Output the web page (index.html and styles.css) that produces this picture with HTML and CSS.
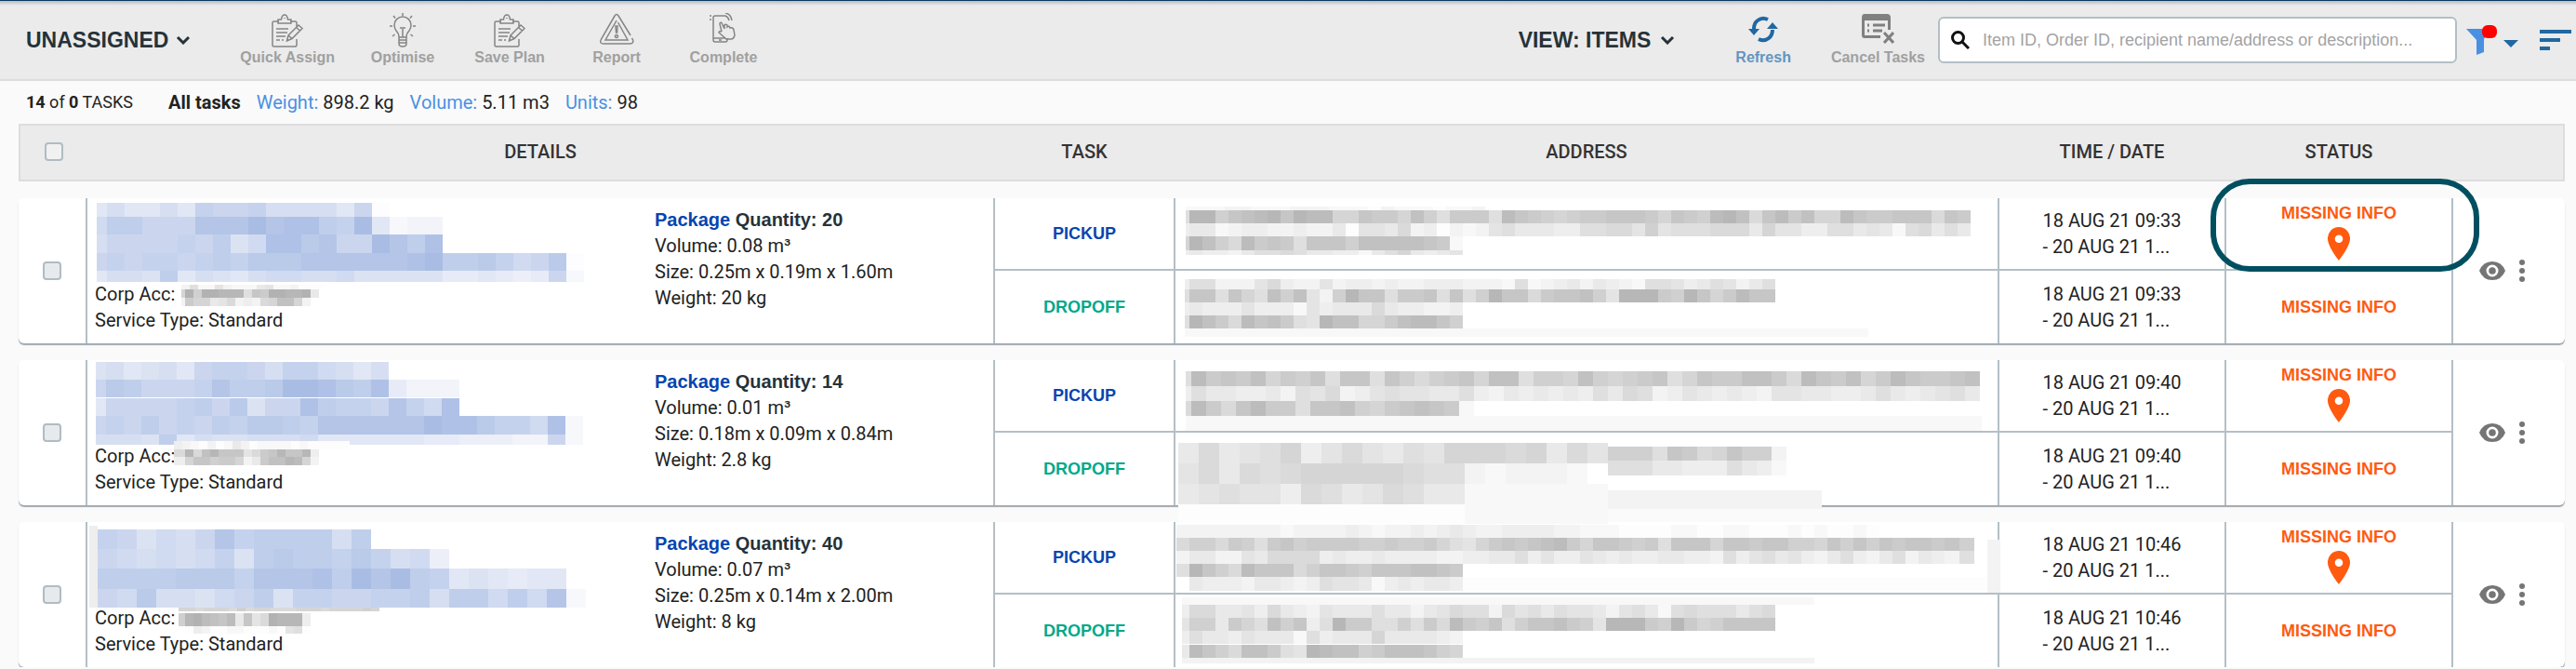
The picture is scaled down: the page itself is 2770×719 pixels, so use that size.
FILE: index.html
```html
<!DOCTYPE html>
<html lang="en">
<head>
    <meta charset="UTF-8">
    <title>Unassigned tasks</title>
    <link rel="stylesheet" href="styles.css">
    <script src="mosaic.js" defer></script>
</head>
<body>
    <svg class="defs" aria-hidden="true">
        <symbol id="clipboard" viewBox="0 0 36 38">
            <path d="M9 9H3.500Q2 9 2 10.500V34.500Q2 36 3.500 36H26.500Q28 36 28 34.500V28M28 15V10.500Q28 9 26.500 9H21M8 11V7H11.500Q12 2 15 2T18.500 7H22V11ZM15 5V6M6 17H19M6 21H18M6 25H16M6 29H10M12 29H14M19 24 30 13 34 16.500 23 27.500 17.500 30ZM19 24 23 27.500M27.500 15.500 31.500 19"/>
        </symbol>
        <symbol id="bulb" viewBox="0 0 30 38">
            <path d="M11 26Q11 22 8 19Q6 16 6 13A9 9 0 0 1 24 13Q24 16 22 19Q19 22 19 26ZM11 26V33Q11 36 15 36T19 33V26M11 29H19M11 32H19M15 26V17M12 16H18M15 0V3M5 3 7 5.500M25 3 23 5.500M1 14H4M26 14H29M4 25 6.500 23M26 25 23.500 23"/>
        </symbol>
        <symbol id="warning" viewBox="0 0 38 36">
            <path d="M17 3Q19 0 21 3L34 24M35.500 27Q39 33 33 33H5Q0 33 2.500 28L17 3M19 8 7 29H31L20.500 10M18 14H20L19.500 21H18.500ZM19 23.500A1.500 1.500 0 1 1 18.900 23.500"/>
        </symbol>
        <symbol id="tap" viewBox="0 0 32 34">
            <path d="M18 3H7Q5 3 5 5V29Q5 31 7 31H18Q20 31 20 29V27M5 27H18M11 29H14M2 2V4M2 6V8M18 0Q24 1 25 8M18 3Q21 4 22 8M14 20 12 12Q12 9.500 14 10.500L17 17V13Q18 11.500 20 13V15Q22 13 23 16Q26 15 27 18L28 24Q27 28 24 28H19L11 21Q11 19 14 20"/>
        </symbol>
        <symbol id="chevron" viewBox="0 0 16 10">
            <path d="M2 2 8 8 14 2"/>
        </symbol>
        <symbol id="pin" viewBox="0 0 24 36">
            <path fill-rule="evenodd" d="M12 0A12 12 0 0 1 24 12.500C24 21 12 36 12 36S0 21 0 12.500A12 12 0 0 1 12 0ZM12 8.500A4.300 4.300 0 1 0 12 17.100A4.300 4.300 0 1 0 12 8.500Z"/>
        </symbol>
        <symbol id="eye" viewBox="0 0 28 20">
            <path fill-rule="evenodd" d="M14 0Q24 0 28 10Q24 20 14 20T0 10Q4 0 14 0ZM14 3.500A6.500 6.500 0 1 0 14 16.500A6.500 6.500 0 1 0 14 3.500ZM14 6.200A3.800 3.800 0 1 1 14 13.800A3.800 3.800 0 1 1 14 6.200Z"/>
        </symbol>
        <symbol id="dots" viewBox="0 0 6 24">
            <circle cx="3" cy="3" r="3"/><circle cx="3" cy="12" r="3"/><circle cx="3" cy="21" r="3"/>
        </symbol>
    </svg>

    <header class="toolbar">
        <button class="menu">UNASSIGNED <svg class="chevron"><use href="#chevron"/></svg></button>
        <div class="tools">
            <button class="tool"><svg width="36" height="38"><use href="#clipboard"/></svg>Quick Assign</button>
            <button class="tool"><svg width="30" height="38"><use href="#bulb"/></svg>Optimise</button>
            <button class="tool"><svg width="36" height="38"><use href="#clipboard"/></svg>Save Plan</button>
            <button class="tool"><svg width="38" height="36"><use href="#warning"/></svg>Report</button>
            <button class="tool"><svg width="32" height="34"><use href="#tap"/></svg>Complete</button>
        </div>
        <div class="actions">
            <button class="menu">VIEW: ITEMS <svg class="chevron"><use href="#chevron"/></svg></button>
            <button class="tool refresh">
                <svg class="refresh-icon" width="34" height="34" viewBox="0 0 34 34">
                    <path d="M22 7Q16 4 11 8Q7 11 7 17M12 28Q18 31 23 27Q27 24 27 18"/>
                    <path class="solid" d="M1 17H13L7 24ZM21 17H33L27 10Z"/>
                </svg>
                Refresh
            </button>
            <button class="tool">
                <svg class="cancel-icon" width="36" height="34" viewBox="0 0 36 34">
                    <path class="solid" fill-rule="evenodd" d="M4 1H28Q32 1 32 5V18H29V8H4V24H21V27H4Q1 27 1 24V5Q1 1 4 1Z"/>
                    <path d="M7 13H9M13 13H26M7 19H9M13 19H23M25 21 35 32M35 21 25 32"/>
                </svg>
                Cancel Tasks
            </button>
            <div class="search">
                <svg width="20" height="20" viewBox="0 0 20 20"><circle cx="7.500" cy="7.500" r="6"/><path d="M12 12 19 19"/></svg>
                <input type="search" aria-label="Search" placeholder="Item ID, Order ID, recipient name/address or description...">
            </div>
            <button class="filter" aria-label="Filter">
                <svg width="56" height="34" viewBox="0 0 56 34">
                    <path fill="#4a90e2" d="M0 5H26L19 16V30L11 33V17Z"/>
                    <rect x="17" y="1" width="16" height="14" rx="6" fill="#f00"/>
                    <path fill="#2168a3" d="M40 17H56L48 25Z"/>
                </svg>
            </button>
            <button class="sort" aria-label="Sort">
                <svg width="34" height="22" viewBox="0 0 34 22"><path fill="#2168a3" d="M0 0H34V4H0ZM0 9H22V13H0ZM0 18H11V22H0Z"/></svg>
            </button>
        </div>
    </header>

    <main class="content">
        <div class="summary">
            <span class="count"><b>14</b> of <b>0</b> TASKS</span>
            <b>All tasks</b>
            <span><span class="key">Weight:</span> 898.2 kg</span>
            <span><span class="key">Volume:</span> 5.11 m3</span>
            <span><span class="key">Units:</span> 98</span>
        </div>

        <table class="tasks">
            <thead>
                <tr>
                    <th><input type="checkbox" aria-label="Select all"></th>
                    <th>DETAILS</th>
                    <th>TASK</th>
                    <th>ADDRESS</th>
                    <th>TIME / DATE</th>
                    <th>STATUS</th>
                    <th></th>
                </tr>
            </thead>
            <tbody>
                <tr>
                    <td class="both select" rowspan="2"><input type="checkbox" aria-label="Select task"></td>
                    <td class="both details" rowspan="2">
                        <div class="account">
                            <p>Corp Acc:</p>
                            <p>Service Type: Standard</p>
                        </div>
                        <div class="package">
                            <p class="quantity"><a href="#">Package</a> Quantity: 20</p>
                            <p>Volume: 0.08 m³</p>
                            <p>Size: 0.25m x 0.19m x 1.60m</p>
                            <p>Weight: 20 kg</p>
                        </div>
                        <svg class="mosaic" data-mosaic="details1"></svg>
                    </td>
                    <td class="type pickup">PICKUP</td>
                    <td class="address"><svg class="mosaic" data-mosaic="pickup1"></svg></td>
                    <td class="time"><div>18 AUG 21 09:33<br>- 20 AUG 21 1...</div></td>
                    <td class="status located">MISSING INFO<svg class="pin"><use href="#pin"/></svg><span class="highlight"></span></td>
                    <td class="both row-actions" rowspan="2">
                        <button aria-label="View"><svg width="28" height="20"><use href="#eye"/></svg></button>
                        <button aria-label="More"><svg width="6" height="24"><use href="#dots"/></svg></button>
                    </td>
                </tr>
                <tr>
                    <td class="type dropoff">DROPOFF</td>
                    <td class="address"><svg class="mosaic" data-mosaic="dropoff1"></svg></td>
                    <td class="time"><div>18 AUG 21 09:33<br>- 20 AUG 21 1...</div></td>
                    <td class="status">MISSING INFO</td>
                </tr>
            </tbody>
            <tbody>
                <tr>
                    <td class="both select" rowspan="2"><input type="checkbox" aria-label="Select task"></td>
                    <td class="both details" rowspan="2">
                        <div class="account">
                            <p>Corp Acc:</p>
                            <p>Service Type: Standard</p>
                        </div>
                        <div class="package">
                            <p class="quantity"><a href="#">Package</a> Quantity: 14</p>
                            <p>Volume: 0.01 m³</p>
                            <p>Size: 0.18m x 0.09m x 0.84m</p>
                            <p>Weight: 2.8 kg</p>
                        </div>
                        <svg class="mosaic" data-mosaic="details2"></svg>
                    </td>
                    <td class="type pickup">PICKUP</td>
                    <td class="address"><svg class="mosaic" data-mosaic="pickup2"></svg></td>
                    <td class="time"><div>18 AUG 21 09:40<br>- 20 AUG 21 1...</div></td>
                    <td class="status located">MISSING INFO<svg class="pin"><use href="#pin"/></svg></td>
                    <td class="both row-actions" rowspan="2">
                        <button aria-label="View"><svg width="28" height="20"><use href="#eye"/></svg></button>
                        <button aria-label="More"><svg width="6" height="24"><use href="#dots"/></svg></button>
                    </td>
                </tr>
                <tr>
                    <td class="type dropoff">DROPOFF</td>
                    <td class="address"><svg class="mosaic" data-mosaic="dropoff2"></svg></td>
                    <td class="time"><div>18 AUG 21 09:40<br>- 20 AUG 21 1...</div></td>
                    <td class="status">MISSING INFO</td>
                </tr>
            </tbody>
            <tbody>
                <tr>
                    <td class="both select" rowspan="2"><input type="checkbox" aria-label="Select task"></td>
                    <td class="both details" rowspan="2">
                        <div class="account">
                            <p>Corp Acc:</p>
                            <p>Service Type: Standard</p>
                        </div>
                        <div class="package">
                            <p class="quantity"><a href="#">Package</a> Quantity: 40</p>
                            <p>Volume: 0.07 m³</p>
                            <p>Size: 0.25m x 0.14m x 2.00m</p>
                            <p>Weight: 8 kg</p>
                        </div>
                        <svg class="mosaic" data-mosaic="details3"></svg>
                    </td>
                    <td class="type pickup">PICKUP</td>
                    <td class="address"><svg class="mosaic" data-mosaic="pickup3"></svg></td>
                    <td class="time"><div>18 AUG 21 10:46<br>- 20 AUG 21 1...</div></td>
                    <td class="status located">MISSING INFO<svg class="pin"><use href="#pin"/></svg></td>
                    <td class="both row-actions" rowspan="2">
                        <button aria-label="View"><svg width="28" height="20"><use href="#eye"/></svg></button>
                        <button aria-label="More"><svg width="6" height="24"><use href="#dots"/></svg></button>
                    </td>
                </tr>
                <tr>
                    <td class="type dropoff">DROPOFF</td>
                    <td class="address"><svg class="mosaic" data-mosaic="dropoff3"></svg></td>
                    <td class="time"><div>18 AUG 21 10:46<br>- 20 AUG 21 1...</div></td>
                    <td class="status">MISSING INFO</td>
                </tr>
            </tbody>
        </table>
    </main>
</body>
</html>
```
FILE: styles.css
```css
* { box-sizing: border-box; margin: 0; padding: 0; }

body { background: #fafafa; color: #222; font: 20px/28px Roboto, sans-serif; }
button { border: none; background: none; font: inherit; color: inherit; cursor: pointer; }
a { color: #0445b1; text-decoration: none; }
svg { display: block; }
.defs { position: absolute; width: 0; height: 0; }

/* toolbar */
.toolbar { display: flex; align-items: center; height: 87px; padding: 0 5px 0 28px; border-top: 1px solid #0b3766; border-bottom: 2px solid #ddd; background: #ebebeb linear-gradient(#bcbcc0, #ebebeb) no-repeat 0 0 / 100% 5px; }
.menu { display: flex; align-items: center; gap: 8px; font: bold 23px/28px "Liberation Sans", Arial, sans-serif; color: #263238; white-space: nowrap; }
.chevron { width: 16px; height: 10px; fill: none; stroke: #263238; stroke-width: 3; }
.tools { display: flex; gap: 31px; margin-left: 53px; }
.tool { display: flex; flex-direction: column; align-items: center; justify-content: space-between; min-width: 84px; height: 58px; font: bold 16px/20px "Liberation Sans", Arial, sans-serif; color: #a0a0a0; white-space: nowrap; }
.tool svg { fill: none; stroke: #858585; stroke-width: 1.5; }
.actions { display: flex; align-items: center; margin-left: auto; }
.actions .tool { min-width: 0; margin-right: 14px; }
.actions .refresh { margin: 0 43px 0 65px; color: #6494c0; }
.actions .menu { gap: 10px; }
.tool .refresh-icon { stroke: #2168a3; stroke-width: 4; }
.tool .cancel-icon { stroke: #808080; stroke-width: 3; }
.refresh-icon .solid { fill: #2168a3; stroke: none; }
.cancel-icon .solid { fill: #808080; stroke: none; }
.search { display: flex; align-items: center; gap: 14px; width: 558px; height: 50px; padding: 0 12px; border: 2px solid #b3bfc5; border-radius: 6px; background: #fff; }
.search svg { flex: none; fill: none; stroke: #111; stroke-width: 3; }
.search input { flex: 1; min-width: 0; border: none; outline: none; background: none; font: 18px/24px "Liberation Sans", Arial, sans-serif; }
.search input::placeholder { color: #a3a3a3; opacity: 1; }
.filter { margin: 0 23px 0 10px; }

/* totals */
.content { padding: 0 12px 0 20px; }
.summary { display: flex; align-items: center; gap: 17px; height: 46px; padding: 0 8px; }
.summary .count { margin-right: 21px; font-size: 18px; }
.key { color: #4a90e2; }

/* table: every tbody is one card, made of a pickup and a dropoff line */
.tasks, .tasks thead { display: block; }
.tasks tr { display: contents; }
.tasks thead, .tasks tbody { display: grid; grid-template-columns: 74px minmax(0, 976fr) 194px minmax(0, 886fr) 244px 244px 120px; }
.tasks thead { height: 62px; margin-bottom: 18px; padding-bottom: 2px; border: 2px solid #ddd; background: #ebebeb; grid-template-columns: 72px minmax(0, 976fr) 194px minmax(0, 886fr) 244px 244px 118px; }
.tasks th { display: flex; align-items: center; justify-content: center; padding-right: 2px; font-weight: 500; font-size: 20px; color: #333; }
.tasks th:first-child { padding: 0; }
.tasks tbody { grid-template-rows: 78px 78px; margin-bottom: 18px; border-radius: 6px; background: #fff; box-shadow: 0 2px 1px #a2a8b0; }
.tasks tbody:last-child { margin-bottom: 0; }
.tasks td { position: relative; display: flex; align-items: center; justify-content: center; border-right: 2px solid #b3bfc5; }
.tasks tr:first-child td:not(.both) { grid-row: 1; border-bottom: 2px solid #b3bfc5; }
.tasks tr + tr td { grid-row: 2; }
.tasks .both { grid-row: 1 / 3; }
.tasks .select { grid-column: 1; }
.tasks .details { grid-column: 2; }
.tasks .type { grid-column: 3; }
.tasks .address { grid-column: 4; }
.tasks .time { grid-column: 5; }
.tasks .status { grid-column: 6; }
.tasks .row-actions { grid-column: 7; gap: 15px; border-right: none; padding-right: 16px; }
.row-actions svg { fill: #757575; }

input[type=checkbox] { appearance: none; width: 20px; height: 20px; border: 2px solid #b0bcc2; border-radius: 4px; background: #e6eaec; }
th input[type=checkbox] { background: #f1f1f1; }

.tasks .details { display: grid; grid-template-columns: 602fr 364fr; align-items: start; padding-left: 8px; }
.account { padding-top: 89px; }
.package { padding-top: 9px; }
.quantity { font: bold 20px/28px "Liberation Sans", Arial, sans-serif; color: #263238; }
.type, .status { font: bold 18px/22px "Liberation Sans", Arial, sans-serif; }
.pickup { color: #0445b1; }
.dropoff { color: #00a88a; }
.status { flex-direction: column; color: #ff5a0f; }
.tasks .located { justify-content: start; padding-top: 5px; }
.pin { width: 24px; height: 36px; margin-top: 4px; fill: #ff5a0f; }
.highlight { position: absolute; z-index: 2; inset: -21px -30px -3px -17px; border: 6px solid #004f60; border-radius: 42px; }

/* pixelated cover over private data, drawn by mosaic.js */
.mosaic { position: absolute; z-index: 1; left: 0; top: 0; width: 100%; height: 100%; overflow: visible; pointer-events: none; shape-rendering: crispEdges; }
```
FILE: mosaic.js
```js
// strip: [x, y, cell width, cell height, shades, blue?]
// shades are hex digits, 0 is the darkest and f is nearly white
var mosaics = {
    details1: [
        [10, 5, 11, 15, "a", 1], [21, 5, 19, 15, "8aa8a56658888a6f", 1],
        [10, 20, 11, 19, "7", 1], [21, 20, 19, 19, "446662220211450aedd", 1],
        [10, 39, 11, 20, "8", 1], [21, 39, 19, 20, "6666564971132660241", 1],
        [10, 59, 11, 19, "6", 1], [21, 59, 19, 19, "56556545333222222104435763f", 1],
        [10, 78, 11, 12, "a", 1], [21, 78, 19, 12, "8894a89a87788799999bbabcb6e", 1],
        [101, 93, 9, 5, "d9eeadeeebaeedfff"],
        [101, 98, 4, 9, "7"], [105, 98, 9, 9, "060011194500110b"],
        [101, 107, 4, 9, "d"], [105, 107, 9, 9, "577ba8dcd87337d"]
    ],
    details2: [
        [9, 2, 11, 19, "9", 1], [20, 2, 19, 19, "8a98a655685578a8", 1],
        [9, 21, 11, 19, "6", 1], [20, 21, 19, 19, "3466652443001341bddd", 1],
        [9, 41, 11, 19, "a", 1], [20, 41, 19, 19, "66665463966145562571", 1],
        [9, 60, 11, 20, "6", 1], [20, 60, 19, 20, "56465645334522222201135571e", 1],
        [9, 80, 11, 11, "8", 1], [20, 80, 19, 11, "8894a8998887aaaaaabbcccdd6e", 1],
        [93, 87, 9, 9, "cdefdfebdfeeeefefffff"],
        [93, 96, 12, 8, "8"], [105, 96, 9, 8, "1831444a8541441c"],
        [93, 104, 12, 9, "c"], [105, 104, 9, 9, "7446557db533127d"]
    ],
    details3: [
        [2, 4, 9, 88, "c"],
        [11, 8, 21, 21, "56978625444484", 1],
        [11, 29, 21, 21, "67878759434453587c", 1],
        [11, 50, 21, 22, "444433352221402045a9abaa", 1],
        [11, 72, 21, 20, "673889764955665548447472e", 1],
        [98, 92, 9, 4, "778777868778887778777767"],
        [98, 98, 7, 14, "6"], [105, 98, 9, 14, "102342b4a80111c"],
        [105, 112, 9, 8, "fcdffeefffefa9f"]
    ],
    pickup1: [
        [11, 9, 14, 4, "eeeddeeedddeeefdeeefeed"],
        [11, 13, 4, 14, "9"], [15, 13, 14, 14, "116432141227745573695559245676554445745621384253772455444845"],
        [11, 27, 4, 14, "c"], [15, 27, 14, 14, "bbedccddcddbfaab8dcfdeda9bbbcc9988a6a999888b7aacc99babe98b9b"],
        [11, 41, 4, 15, "7"], [15, 41, 14, 15, "13682545944463333345e"],
        [11, 56, 4, 5, "c"], [15, 56, 14, 5, "bccdb9989bbcceb97bcba"]
    ],
    dropoff1: [
        [10, 9, 5, 11, "c"], [15, 9, 14, 11, "99ddda8cddadccdcddcccddde9edcbdbcde99acb9adb9"],
        [10, 20, 5, 14, "9"], [15, 20, 14, 14, "449479363ad614495549496144854436a111561475244"],
        [10, 34, 5, 14, "c"], [15, 34, 14, 14, "bcccaccceacbbb8bccddc"],
        [10, 48, 5, 14, "9"], [15, 48, 14, 14, "135824359a13377532246"],
        [10, 62, 735, 9, "e"]
    ],
    pickup2: [
        [11, 12, 6, 16, "9"], [17, 12, 16, 16, "25453756494494686547339667367654974553358245375245543"],
        [11, 28, 6, 16, "c"], [17, 28, 16, 16, "9bbccbd9a8dca9aabb9cdbcbcbc9b89dcabcbcdaabbccb9bcba9b"],
        [11, 44, 6, 16, "8"], [17, 44, 16, 16, "258425594436754345e"],
        [11, 60, 856, 16, "e"]
    ],
    dropoff2: [
        [3, 11, 22, 22, "b8ba97ca8ab9a77787b8a"],
        [3, 33, 22, 22, "a8b89877777899deddde"],
        [3, 55, 22, 22, "ba9aac89ba89bbeeeeeee"],
        [3, 77, 308, 21, "f"], [311, 77, 154, 21, "e"],
        [465, 15, 16, 15, "66694587466d"],
        [465, 30, 16, 16, "999bbccc9bce"],
        [465, 62, 230, 20, "d"]
    ],
    pickup3: [
        [1, 3, 14, 15, "ddddddddeddddcdeddcdcbcddccccddeeeffffeeffeefffefeffef"],
        [1, 17, 14, 14, "8668569546555566566579a754543257445659444744544667464645445"],
        [1, 31, 14, 14, "dbbddab8888cbccbccccddccbb9caccabcbccbbccd9ca9bacdb9cdb9dbc"],
        [1, 45, 14, 14, "9146824448644564443345"],
        [15, 59, 14, 15, "bcccdbbcdc9aabecbcbbc"],
        [309, 59, 564, 15, "f"],
        [827, 17, 16, 14, "46"], [827, 31, 16, 14, "d9"],
        [873, 19, 14, 57, "d"]
    ],
    dropoff3: [
        [7, 3, 680, 8, "e"],
        [7, 11, 8, 14, "c"], [15, 11, 14, 14, "88bbac8bcdabbb9bbdba899d8a9b9aabda9be98999b98"],
        [7, 25, 8, 14, "a"], [15, 25, 14, 14, "66b579364c915599695825649644356a1115615764444"],
        [7, 39, 8, 14, "c"], [15, 39, 14, 14, "9bbcabbbe9cbbb7bbbbcd"],
        [7, 54, 8, 14, "b"], [15, 54, 14, 14, "24683359a123365333467"],
        [7, 68, 680, 6, "d"]
    ]
};

function shade(digit, blue) {
    var n = parseInt(digit, 16);
    if (blue) {
        return "rgb(" + (169 + n * 5.6) + "," + (189 + n * 4.2) + "," + (228 + n * 1.7) + ")";
    }
    var g = 178 + n * 5;
    return "rgb(" + g + "," + g + "," + g + ")";
}

document.querySelectorAll(".mosaic").forEach(function (svg) {
    mosaics[svg.dataset.mosaic].forEach(function (strip) {
        strip[4].split("").forEach(function (digit, i) {
            var rect = document.createElementNS("http://www.w3.org/2000/svg", "rect");
            rect.setAttribute("x", strip[0] + i * strip[2]);
            rect.setAttribute("y", strip[1]);
            rect.setAttribute("width", strip[2]);
            rect.setAttribute("height", strip[3]);
            rect.setAttribute("fill", shade(digit, strip[5]));
            svg.appendChild(rect);
        });
    });
});
```
